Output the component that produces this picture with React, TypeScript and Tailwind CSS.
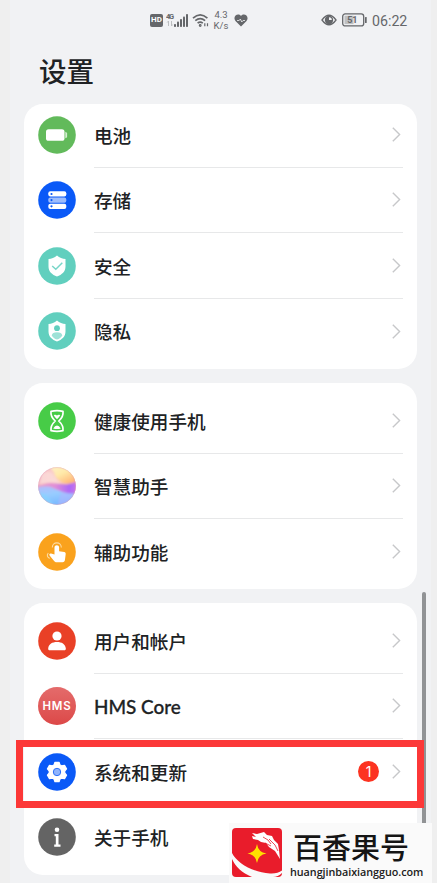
import type { ReactNode } from 'react';

const Disc = ({ color, children }: { color: string; children: ReactNode }) => (
  <svg className="h-[38px] w-[38px] shrink-0" viewBox="0 0 38 38">
    <circle cx="19" cy="19" r="18.8" fill={color} />
    {children}
  </svg>
);

const shield = 'M19 8.5C21.5 10.8 24.5 11.7 27.5 12V19.5C27.5 24.5 24 27.7 19 29.5C14 27.7 10.5 24.5 10.5 19.5V12C13.5 11.7 16.5 10.8 19 8.5Z';

const icons = {
  battery: (
    <Disc color="#62ba5b">
      <rect x="8" y="13.2" width="18.5" height="11.6" rx="2.6" fill="#fff" />
      <path d="M27.3 15.8q1.8.4 1.8 1.8v2.8q0 1.4-1.8 1.8z" fill="#d5efd2" />
    </Disc>
  ),
  storage: (
    <Disc color="#0a59f7">
      <rect x="10.3" y="10.3" width="18" height="5.3" rx="2" fill="#fff" />
      <rect x="10.3" y="16.5" width="18" height="5.3" rx="2" fill="#9dbcfc" />
      <rect x="10.3" y="22.7" width="18" height="5.3" rx="2" fill="#fff" />
      <g fill="#0a59f7"><circle cx="13.5" cy="13" r="1.1" /><circle cx="13.5" cy="19.1" r="1.1" /><circle cx="13.5" cy="25.3" r="1.1" /></g>
    </Disc>
  ),
  security: (
    <Disc color="#61cfbe">
      <path d={shield} fill="#fff" />
      <path d="m14.2 19 3.6 3.3 6.5-6.5" fill="none" stroke="#78d6c8" strokeWidth="1.5" />
    </Disc>
  ),
  privacy: (
    <Disc color="#61cfbe">
      <path d={shield} fill="#fff" />
      <circle cx="19" cy="16.2" r="2.9" fill="#61cfbe" />
      <path d="M13.7 23.4C14 21.2 16 20.2 19 20.2s5 1 5.3 3.2C23.3 25.3 21.3 26.8 19 27.4c-2.3-.6-4.3-2.1-5.3-4Z" fill="#9ee2d7" />
    </Disc>
  ),
  hourglass: (
    <Disc color="#47cc47">
      <path d="M13 9.3q6-1.400 12 0c.5 4-1.500 7.200-4.200 9.700 2.700 2.500 4.700 5.700 4.200 9.700q-6 1.400-12 0c-.5-4 1.500-7.200 4.200-9.700C14.500 16.500 12.500 13.300 13 9.300Z" fill="none" stroke="#fff" strokeWidth="1.7" strokeLinejoin="round" />
      <path d="M15.800 13.200c1.400-.8 2.200-.4 3.200.3 1-.7 1.800-1.100 3.200-.3q-1 2.300-3.200 4-2.200-1.700-3.200-4ZM15.200 26.500q1.800-3 3.800-3t3.800 3q-3.800 1-7.600 0Z" fill="#fff" />
    </Disc>
  ),
  assistant: (
    <svg className="h-[38px] w-[38px] shrink-0" viewBox="0 0 38 38">
      <defs>
        <clipPath id="orb"><circle cx="19" cy="19" r="18.8" /></clipPath>
        <filter id="soft" x="-20%" y="-20%" width="140%" height="140%"><feGaussianBlur stdDeviation=".8" /></filter>
        <linearGradient id="sky" x2="1" y2=".2"><stop stopColor="#f6b9c6" /><stop offset=".5" stopColor="#fbd0c8" /><stop offset="1" stopColor="#ffb98c" /></linearGradient>
        <linearGradient id="sun" x2=".8" y2="1"><stop stopColor="#fff3cf" /><stop offset=".5" stopColor="#ffe9a8" /><stop offset="1" stopColor="#ffb073" /></linearGradient>
        <linearGradient id="wave"><stop stopColor="#f09fbd" /><stop offset=".45" stopColor="#e28fd6" /><stop offset=".8" stopColor="#ae68f6" /><stop offset="1" stopColor="#d07ae8" /></linearGradient>
        <linearGradient id="sea" x2=".4" y2="1"><stop stopColor="#b8b9fb" /><stop offset=".45" stopColor="#98cdff" /><stop offset="1" stopColor="#74b6ff" /></linearGradient>
      </defs>
      <g clipPath="url(#orb)">
        <path fill="url(#sky)" d="M0 0h38v38H0z" />
        <g filter="url(#soft)">
          <path fill="url(#sun)" d="M10-2h30v17q-9 4-16 0-7-4-8-10Z" />
          <path fill="#fbdcd9" opacity=".8" d="M4 7q8-5 11 0 3 6 8 9Q12 14 2 17Z" />
          <path fill="url(#wave)" d="M-3 18c7 1 11-2 16-2 9 0 14 4 27-2V40H-3Z" />
          <path fill="url(#sea)" d="M-3 20.500c8-1 12-2 17 0 8 3.500 14 7 26 6V40H-3Z" />
          <path fill="#86d3ff" opacity=".7" d="M-2 26q12-2 18 14H-2Z" />
          <path fill="#b9b4ff" opacity=".5" d="M23 25q8 3 16 1-5 11-19 12Z" />
        </g>
      </g>
      <circle cx="19" cy="19" r="18.4" fill="none" stroke="#d8a0bd" strokeOpacity=".45" strokeWidth=".7" />
    </svg>
  ),
  touch: (
    <Disc color="#faa21d">
      <path d="M16.500 14.300c0-2.900 4.600-2.900 4.600 0v4l5.200.8c1 .2 1.500.9 1.400 1.900l-.7 5.600c-.2 1.700-1 2.700-2.400 2.700h-5.800c-1.200 0-2-.4-2.700-1.300l-4.500-5.500c-.8-1.200.2-2.400 1.500-1.900l3.400 1Z" fill="#fff" />
      <path d="M14.300 14.400a4.500 4.500 0 1 1 9 0M11.700 25.400c-2.400-.7-3.200-3.300-1.400-5.400" fill="none" stroke="#fddba3" strokeWidth="1.100" />
    </Disc>
  ),
  user: (
    <Disc color="#e94026">
      <circle cx="19" cy="14" r="4.600" fill="#fff" />
      <path d="M10.200 26.200c.6-4.200 4-6.200 8.800-6.200s8.200 2 8.800 6.200c.2 1.300-.4 2.100-1.700 2.100H11.900c-1.300 0-1.900-.8-1.700-2.100Z" fill="#fff" />
    </Disc>
  ),
  hms: (
    <span className="flex h-[38px] w-[38px] shrink-0 items-center justify-center rounded-full bg-linear-to-b from-[#e46b6b] to-[#dc4848] pt-px pl-px font-['Inter',sans-serif] text-[11.500px] leading-none font-semibold tracking-[0.800px] text-white">HMS</span>
  ),
  gear: (
    <Disc color="#0a59f7">
      <path d="M17 9.300h4l1 2.700 1.600.9 2.900-.5 2 3.500-1.800 2.200v1.800l1.800 2.200-2 3.500-2.900-.5-1.600.9-1 2.700h-4l-1-2.700-1.600-.9-2.900.5-2-3.500 1.800-2.200v-1.800l-1.800-2.200 2-3.500 2.900.5 1.600-.9Z" fill="#fff" stroke="#fff" strokeWidth="1.300" strokeLinejoin="round" />
      <circle cx="19" cy="19" r="3.700" fill="#8fb3fc" stroke="#2d70f8" strokeWidth="1" />
    </Disc>
  ),
  info: (
    <Disc color="#646464">
      <circle cx="19" cy="11.800" r="2.300" fill="#fff" />
      <path d="M16.500 16h4v10.500h2v2.200h-6.300v-2.200h1.600v-8.300h-1.300Z" fill="#fff" />
    </Disc>
  ),
};

type RowProps = { icon: keyof typeof icons; label: string; latin?: boolean; last?: boolean; badge?: string };

const Row = ({ icon, label, latin, last, badge }: RowProps) => (
  <div className="flex h-[65.6px] pl-[13.500px]">
    <div className="flex items-center pb-[0.500px]">{icons[icon]}</div>
    <div className={`mr-[14px] ml-[18.500px] flex flex-1 items-center border-b ${last ? 'border-transparent' : 'border-[#e7e8e9]'}`}>
      <span className={`flex-1 leading-6 font-medium whitespace-nowrap ${latin ? "pt-[2px] font-['Lato',sans-serif] text-[18.900px] [-webkit-text-stroke:0.3px_#202224]" : 'pt-[0.500px] text-[18.600px]'}`}>{label}</span>
      {badge && <span className="mr-[12px] flex h-[21px] w-[21px] items-center justify-center rounded-full bg-[#fc3321] font-['Inter',sans-serif] text-[14px] text-white">{badge}</span>}
      <svg className="mr-px h-[17px] w-[11px]" viewBox="0 0 11 17"><path d="m1.800 1.800 6.800 6.700-6.800 6.700" fill="none" stroke="#c7c8ca" strokeWidth="1.400" /></svg>
    </div>
  </div>
);

const StatusBar = () => (
  <div className="flex h-[40px] items-center pr-[23px] pl-[140px] text-[#65676a]">
    <span className="flex h-[13px] w-[13px] items-center justify-center rounded-[2px] bg-[#65676a] font-['Roboto',sans-serif] text-[8px] font-bold text-white">HD</span>
    <svg className="ml-[3px] h-[16px] w-[23px]" viewBox="0 0 23 16" fill="currentColor">
      <text x="0" y="6.800" fontFamily="Roboto, sans-serif" fontSize="7.500" fontWeight="700" textLength="8">4G</text>
      <path d="M2.500 9v5M1.200 10.500 2.500 9M5.500 9v5l1.200-1.500" stroke="#bcbec0" fill="none" />
      <rect x="8" y="12" width="2" height="3" rx=".8" /><rect x="11" y="9.500" width="2" height="5.500" rx=".8" /><rect x="14" y="7" width="2" height="8" rx=".8" /><rect x="17" y="4.500" width="2" height="10.500" rx=".8" /><rect x="20" y="2" width="2" height="13" rx=".8" />
    </svg>
    <svg className="ml-[3px] h-[16px] w-[18px]" viewBox="0 0 18 16" fill="none" stroke="currentColor" strokeWidth="1.700">
      <path d="M1 6.200Q8.200-.3 15.400 6.200M3.300 8.700q4.900-4.200 9.800 0M5.600 11.100q2.600-2 5.200 0" /><circle cx="8.200" cy="13.500" r=".6" /><path d="M12.800 11.200v3M15.500 11.200v3" strokeWidth="1.200" />
    </svg>
    <span className="ml-[2px] w-[18px] text-center font-['Roboto',sans-serif] text-[9.500px] leading-[11px]">4.3<br />K/s</span>
    <svg className="ml-[4px] h-[13px] w-[14px]" viewBox="0 0 14 13"><path d="M7 12.500 1.500 7C-2 2.500 4-2 7 2c3-4 9 .5 5.500 5Z" fill="currentColor" /><path d="M3 6.500h2.200L6.300 5l1.500 3L9 6.500h2" fill="none" stroke="#f1f2f4" strokeWidth=".8" /></svg>
    <div className="flex-1" />
    <svg className="h-[12px] w-[16px]" viewBox="0 0 16 12"><path d="M1 6Q8-3.500 15 6 8 15.500 1 6Z" fill="none" stroke="currentColor" strokeWidth="1.300" /><circle cx="8" cy="6" r="4.200" fill="currentColor" /><path d="M8 6V3.200A2.800 2.800 0 0 1 10.800 6Z" fill="#f1f2f4" /></svg>
    <svg className="ml-[5px] h-[14px] w-[26px]" viewBox="0 0 26 14" fill="currentColor"><rect x=".7" y=".9" width="21" height="12" rx="2.500" fill="none" stroke="currentColor" strokeWidth="1.300" /><rect x="2.500" y="2.700" width="9" height="8.400" fill="#bec0c2" /><text x="5.200" y="10.300" fontFamily="Roboto, sans-serif" fontSize="9" fontWeight="700">51</text><rect x="23" y="4" width="1.700" height="6" rx=".5" /></svg>
    <span className="ml-[4px] w-[36px] pt-[2px] font-['Roboto',sans-serif] text-[14.200px] leading-none whitespace-nowrap">06:22</span>
  </div>
);

export default function App() {
  return (
    <div className="relative h-[883px] w-[437px] overflow-hidden bg-[#efefef] pr-[6px] pl-[10px] font-['Noto_Sans_CJK_SC',sans-serif] text-[#202224]">
      <main className="h-full bg-[#f1f2f4]">
        <StatusBar />
        <h1 className="h-[64px] pt-[10px] pl-[29px] text-[27.500px] leading-[40px] font-medium">设置</h1>
        <div className="flex flex-col gap-[14.500px] pr-[14px] pl-[14px]">
          <section className="h-[264.500px] overflow-hidden rounded-[19px] bg-white">
            <div className="-mt-[2px]">
              <Row icon="battery" label="电池" />
              <Row icon="storage" label="存储" />
              <Row icon="security" label="安全" />
              <Row icon="privacy" label="隐私" last />
            </div>
          </section>
          <section className="h-[205.500px] rounded-[19px] bg-white pt-[5px]">
            <Row icon="hourglass" label="健康使用手机" />
            <Row icon="assistant" label="智慧助手" />
            <Row icon="touch" label="辅助功能" last />
          </section>
          <section className="h-[272px] rounded-[19px] bg-white pt-[5px]">
            <Row icon="user" label="用户和帐户" />
            <Row icon="hms" label="HMS Core" latin />
            <Row icon="gear" label="系统和更新" badge="1" />
            <Row icon="info" label="关于手机" last />
          </section>
        </div>
      </main>
      <div className="absolute top-[592px] left-[421.500px] h-[260px] w-[4.500px] rounded-full bg-[#919395]" />
      <div className="absolute top-[740px] left-[16px] h-[68px] w-[408px] border-[7px] border-[#fc3838]" />
      <div className="absolute top-[823px] left-[229px] flex h-[60px] w-[203px] bg-[#fafafa] pt-[5px] pl-[3px]">
        <svg className="h-[50px] w-[50px] shrink-0" viewBox="0 0 50 50">
          <defs><clipPath id="badge"><rect width="50" height="49" rx="4" /></clipPath></defs>
          <g clipPath="url(#badge)">
            <rect width="50" height="49" fill="#e91c2b" />
            <path d="M0 25C5 35 20 44 38 45.500c5 .4 9-1 12-3V45q-4 4-9 4H20C10 45 3 38 0 31Z" fill="#fafafa" />
            <path d="m20 5 5 1 7-2 3 3 5 1 2 4 4 4 1 6 1 9-5-8-6-4-3-4-5-1-3-2-5-1-1-3 4 1Z" fill="#fff" />
            <path d="m31 9 5 3 3 4m-2-5 6 6 3 6m-13-8 6 3" fill="none" stroke="#e91c2b" strokeWidth=".8" />
            <path d="M25 16q1.200 8.300 9.500 9.500-8.300 1.200-9.500 9.500-1.200-8.300-9.500-9.500Q23.800 24.300 25 16Z" fill="#ffe000" />
          </g>
        </svg>
        <div className="ml-[8px] flex flex-col">
          <span className="h-[37px] pl-[3px] text-[29px] leading-[37px] font-medium whitespace-nowrap text-[#151515]">百香果号</span>
          <span className="font-['Open_Sans',sans-serif] text-[10.800px] leading-[14px] font-semibold tracking-[-0.050px] whitespace-nowrap text-[#202020]">huangjinbaixiangguo.com</span>
        </div>
      </div>
    </div>
  );
}
